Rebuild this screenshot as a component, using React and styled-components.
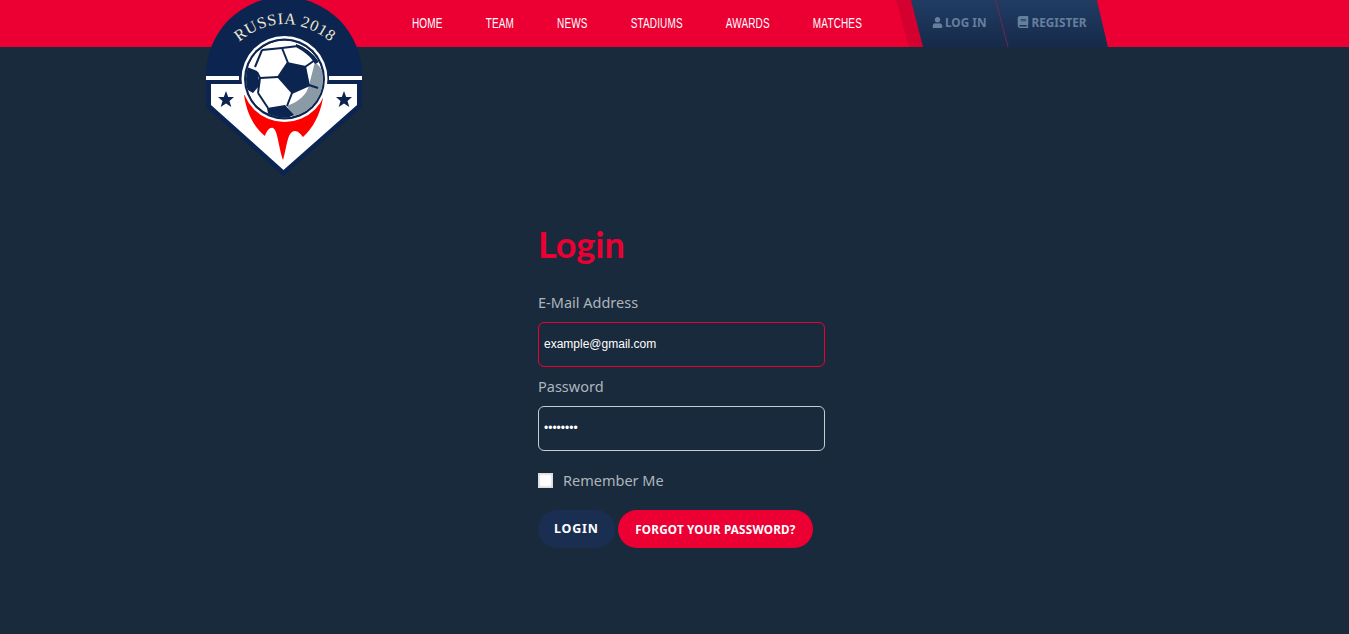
import React from 'react';
import styled, { createGlobalStyle } from 'styled-components';
import { FaUser, FaBook } from 'react-icons/fa';

const GlobalStyle = createGlobalStyle`
  html, body {
    margin: 0;
    padding: 0;
    background: #192a3c;
  }
`;

const Page = styled.div`
  position: relative;
  min-height: 634px;
  background: #192a3c;
  overflow: hidden;
`;

const Header = styled.header`
  display: flex;
  align-items: stretch;
  height: 47px;
  padding-left: 412px;
  background: #ec0034;
`;

/* no condensed font is installed, so the nav is squeezed as a whole */
const Nav = styled.nav`
  display: flex;
  flex: none;
  align-items: center;
  gap: 64.6px;
  width: 484px;
  padding-bottom: 3px;
  box-sizing: border-box;
  transform: scaleX(0.667);
  transform-origin: left center;
`;

const NavLink = styled.a`
  font-family: 'Liberation Sans', Arial, sans-serif;
  font-size: 15px;
  letter-spacing: 0.2px;
  color: #fff;
  text-transform: uppercase;
  white-space: nowrap;
`;

const AuthWrap = styled.div`
  display: flex;
  flex: none;
  width: 212px;
  background: #d4002f;
  clip-path: polygon(0 0, 201px 0, 212px 47px, 13px 47px);
`;

const AuthPanel = styled.div`
  display: flex;
  position: relative;
  align-items: center;
  width: 197px;
  height: 47px;
  margin-left: 15px;
  padding-bottom: 3px;
  box-sizing: border-box;
  clip-path: polygon(0 0, 186px 0, 197px 47px, 12px 47px);
  background: linear-gradient(#213c63, #162a4a);
`;

const AuthLink = styled.a`
  display: flex;
  align-items: center;
  gap: 2px;
  margin-left: ${({ $left }) => $left}px;
  font-family: 'Noto Sans', 'DejaVu Sans', sans-serif;
  font-size: 11.8px;
  font-weight: 700;
  color: #64809f;
  text-transform: uppercase;
  white-space: nowrap;
`;

const Divider = styled.span`
  position: absolute;
  left: 84px;
  top: 0;
  width: 1px;
  height: 48px;
  background: #6b2a50;
  transform: skewX(15deg);
  transform-origin: top left;
`;

const Logo = styled.svg`
  position: absolute;
  left: 195px;
  top: 0;
  width: 180px;
  height: 180px;
`;

const Main = styled.main`
  width: 287px;
  margin-left: 538px;
  padding-top: 175px;
`;

const Title = styled.h1`
  margin: 0 0 25px;
  font-family: 'Lato', 'Noto Sans', sans-serif;
  font-size: 36px;
  line-height: 44px;
  font-weight: 700;
  color: #ec0034;
`;

const Label = styled.label`
  display: block;
  margin-bottom: 9px;
  font-family: 'Noto Sans', sans-serif;
  font-size: 14.5px;
  line-height: 22px;
  color: #adb5bd;
`;

const Input = styled.input`
  display: block;
  box-sizing: border-box;
  width: 287px;
  height: 45px;
  margin-bottom: 8px;
  padding: 0 5px 2px;
  background: transparent;
  border: 1px solid ${({ $active }) => ($active ? '#ec0034' : '#c5ccd3')};
  border-radius: 6px;
  outline: none;
  color: #fff;
  font-family: 'Liberation Sans', Arial, sans-serif;
  font-size: 12px;
`;

const CheckRow = styled.div`
  display: flex;
  align-items: center;
  gap: 10px;
  margin-top: 18px;
`;

const Check = styled.span`
  display: block;
  box-sizing: border-box;
  width: 15px;
  height: 15px;
  background: #fff;
  border: 1px solid #ddd;
  box-shadow: inset 0 0 2px #aaa;
`;

const CheckLabel = styled.span`
  font-family: 'Noto Sans', sans-serif;
  font-size: 14.5px;
  line-height: 22px;
  color: #adb5bd;
`;

const Buttons = styled.div`
  display: flex;
  gap: 3px;
  margin-top: 19px;
`;

const Button = styled.button`
  height: 38px;
  padding: 0 ${({ $primary }) => ($primary ? 16 : 17.5)}px 1px;
  border: 0;
  border-radius: 19px;
  background: ${({ $primary }) => ($primary ? '#1a2e52' : '#ec0034')};
  color: #fff;
  font-family: 'Noto Sans', sans-serif;
  font-size: ${({ $primary }) => ($primary ? 12.5 : 11.7)}px;
  font-weight: 700;
  letter-spacing: ${({ $primary }) => ($primary ? '0.8px' : '0.2px')};
  text-transform: uppercase;
  white-space: nowrap;
`;

const navItems = ['Home', 'Team', 'News', 'Stadiums', 'Awards', 'Matches'];

const NAVY = '#0c2450';

const LogoMark = () => (
  <Logo viewBox="0 0 180 180">
    <defs>
      <path id="logo-arc" d="M44 42 Q89 6 136 42" />
      <clipPath id="ball-clip">
        <circle cx="89.5" cy="79" r="38.5" />
      </clipPath>
    </defs>
    <path d="M11 75 A78 78 0 0 1 167 75 V107 L88.5 176 L11 107 Z" fill={NAVY} />
    <rect x="11" y="76" width="33" height="4" fill="#fff" />
    <rect x="134" y="76" width="33" height="4" fill="#fff" />
    <path d="M16 84 H162 V105 L88.5 170 L16 105 Z" fill="#fff" />
    <path
      d="M49 95 C52 115 60 128 70 136 C72 130 75 127 78 128 C83 131 83 145 88 160 C92 146 92 136 97 132 C101 129 105 133 108 137 C118 128 125 115 128 98 Z"
      fill="#ff0000"
    />
    <circle cx="89.5" cy="79" r="43" fill="#fff" />
    <circle cx="89.5" cy="79" r="40.5" fill={NAVY} />
    <g clipPath="url(#ball-clip)">
      <circle cx="89.5" cy="79" r="38.5" fill="#fff" />
      <path
        d="M120 62 C127 68 132 77 131 85 C129 98 117 113 98 116 L92 106 C103 102 112 95 114 85 Z"
        fill="#8a9aa6"
      />
      <path d="M101 44 C110 47 118 53 124 62 L120 64 C116 57 110 52 101 47 Z" fill={NAVY} />
      <path d="M92 62 L111 66 L115 86 L97 94 L82 77 Z" fill={NAVY} />
      <path d="M52 67 L62 71 L65 85 L58 93 L49 88 Z" fill={NAVY} />
      <path d="M72 108 L90 105 L99 115 L83 122 L74 119 Z" fill={NAVY} />
      <g fill="none" stroke={NAVY} strokeWidth="2">
        <path d="M93 63 L87 48" />
        <path d="M87 48 L67 50" />
        <path d="M87 48 L103 46" />
        <path d="M67 50 L60 67" />
        <path d="M83 77 L65 78" />
        <path d="M65 78 L62 72" />
        <path d="M65 78 L63 93" />
        <path d="M63 93 L73 108" />
        <path d="M97 93 L92 106" />
        <path d="M110 67 L120 60" />
        <path d="M114 85 L123 88" />
      </g>
    </g>
    <path
      d="M31 91 L33.2 97 L39 97 L34.5 101 L36.3 107 L31 103.5 L25.7 107 L27.5 101 L23 97 L28.8 97 Z"
      fill={NAVY}
    />
    <path
      d="M149 91 L151.2 97 L157 97 L152.5 101 L154.3 107 L149 103.5 L143.7 107 L145.5 101 L141 97 L146.8 97 Z"
      fill={NAVY}
    />
    <text
      fill="#efe9cf"
      fontFamily="'Liberation Serif', serif"
      fontSize="16"
      textLength="100"
    >
      <textPath href="#logo-arc">RUSSIA 2018</textPath>
    </text>
  </Logo>
);

export default function App() {
  return (
    <Page>
      <GlobalStyle />
      <Header>
        <Nav>
          {navItems.map((item) => (
            <NavLink key={item}>{item}</NavLink>
          ))}
        </Nav>
        <AuthWrap>
          <AuthPanel>
            <AuthLink $left={21}>
              <FaUser size={11} />
              Log in
            </AuthLink>
            <Divider />
            <AuthLink $left={31}>
              <FaBook size={12} />
              Register
            </AuthLink>
          </AuthPanel>
        </AuthWrap>
      </Header>
      <LogoMark />
      <Main>
        <Title>Login</Title>
        <Label>E-Mail Address</Label>
        <Input $active defaultValue="example@gmail.com" />
        <Label>Password</Label>
        <Input type="password" defaultValue="password" />
        <CheckRow>
          <Check />
          <CheckLabel>Remember Me</CheckLabel>
        </CheckRow>
        <Buttons>
          <Button $primary>Login</Button>
          <Button>Forgot your password?</Button>
        </Buttons>
      </Main>
    </Page>
  );
}
